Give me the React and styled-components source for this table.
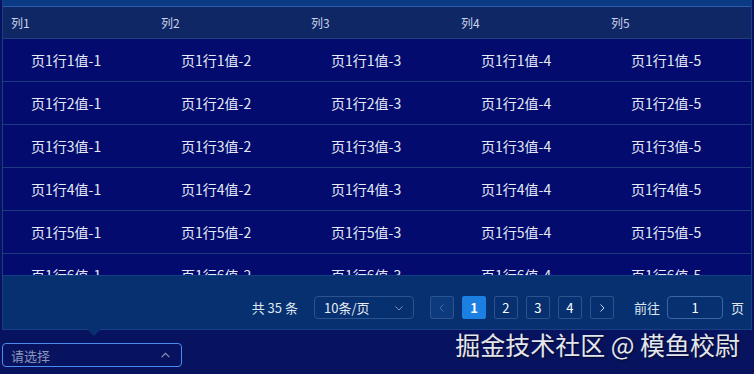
import React from 'react'
import styled, { createGlobalStyle } from 'styled-components'

const GlobalStyle = createGlobalStyle`
  html, body {
    margin: 0;
    padding: 0;
    background: #08135f;
  }
  body {
    font-family: "Noto Sans CJK SC", "Noto Sans", sans-serif;
  }
`

const Page = styled.div`
  position: relative;
  width: 754px;
  height: 374px;
  overflow: hidden;
  background: #08135f;
`

const Popover = styled.div`
  position: relative;
  margin-left: 2px;
  width: 750px;
  height: 330px;
  box-sizing: border-box;
  border: 1px solid #1b3f86;
  border-top: none;
  background: #030c6e;
  display: flex;
  flex-direction: column;
`

const TopStrip = styled.div`
  height: 6px;
  background: #0b3a84;
  border-bottom: 1px solid #2b5cab;
  flex-shrink: 0;
`

const TableWrap = styled.div`
  height: 268px;
  overflow: hidden;
  flex-shrink: 0;
`

const Grid = styled.div`
  display: grid;
  grid-template-columns: repeat(5, 150px);
`

const HeadCell = styled.div`
  height: 31px;
  line-height: 31px;
  padding-left: 8px;
  font-size: 12px;
  color: #c9d2ea;
  background: #0f2764;
  border-bottom: 1px solid #22407e;
`

const Cell = styled.div`
  height: 42px;
  line-height: 42px;
  padding-left: 28px;
  font-size: 14px;
  color: #e6eaf5;
  border-bottom: 1px solid #1d3a7f;
`

const Pager = styled.div`
  flex: 1;
  background: #06306f;
  border-top: 1px solid #133f85;
  display: flex;
  align-items: center;
  justify-content: flex-end;
  padding: 20px 7px 10px 0;
  font-size: 13px;
  color: #dfe5f2;
`

const Total = styled.span`
  margin-right: 16px;
`

const SizeSelect = styled.div`
  width: 100px;
  height: 23px;
  box-sizing: border-box;
  border: 1px solid #2a538f;
  border-radius: 4px;
  display: flex;
  align-items: center;
  justify-content: space-between;
  padding: 0 9px;
  margin-right: 16px;
  color: #e8ecf6;
`

const Pages = styled.div`
  display: flex;
  gap: 8px;
`

const PageBtn = styled.div`
  width: 24px;
  height: 23px;
  box-sizing: border-box;
  border-radius: 2px;
  display: flex;
  align-items: center;
  justify-content: center;
  font-size: 13px;
  font-weight: ${p => (p.$active ? 700 : 400)};
  color: ${p => (p.$disabled ? '#4a6aa0' : '#ffffff')};
  background: ${p => (p.$active ? '#1b80e2' : p.$disabled ? '#0d3a7c' : 'transparent')};
  border: 1px solid ${p => (p.$active ? '#1b80e2' : '#2a538f')};
`

const Jump = styled.div`
  display: flex;
  align-items: center;
  margin-left: 20px;
`

const JumpInput = styled.div`
  width: 56px;
  height: 23px;
  box-sizing: border-box;
  border: 1px solid #3a66a8;
  border-radius: 4px;
  display: flex;
  align-items: center;
  justify-content: center;
  margin: 0 8px 0 7px;
  color: #ffffff;
`

const Arrow = styled.div`
  position: absolute;
  left: 84px;
  bottom: -7px;
  width: 0;
  height: 0;
  border-left: 7px solid transparent;
  border-right: 7px solid transparent;
  border-top: 7px solid #06306f;
`

const Select = styled.div`
  margin: 13px 0 0 2px;
  width: 180px;
  height: 24px;
  box-sizing: border-box;
  border: 1px solid #4a8cf0;
  border-radius: 4px;
  background: #08135f;
  display: flex;
  align-items: center;
  justify-content: space-between;
  padding: 0 10px 0 8px;
  font-size: 13px;
  color: #8c96bd;
`

const Watermark = styled.div`
  position: absolute;
  right: 14px;
  bottom: 12px;
  font-size: 25px;
  color: #e4e6ee;
  text-shadow: 1px 1px 2px rgba(0, 0, 0, 0.6);
  white-space: nowrap;
`

const Chevron = ({ dir = 'down', color = '#7e8fb8', size = 10 }) => (
  <svg width={size} height={size} viewBox="0 0 10 10" fill="none">
    {dir === 'down' && <path d="M1.5 3.5 L5 7 L8.5 3.5" stroke={color} strokeWidth="1" />}
    {dir === 'up' && <path d="M1.5 6.5 L5 3 L8.5 6.5" stroke={color} strokeWidth="1" />}
    {dir === 'left' && <path d="M6.5 1.5 L3 5 L6.5 8.5" stroke={color} strokeWidth="1" />}
    {dir === 'right' && <path d="M3.5 1.5 L7 5 L3.5 8.5" stroke={color} strokeWidth="1" />}
  </svg>
)

const COLUMNS = ['列1', '列2', '列3', '列4', '列5']
const ROWS = [1, 2, 3, 4, 5, 6]

export default function App() {
  return (
    <Page>
      <GlobalStyle />
      <Popover>
        <TopStrip />
        <TableWrap>
          <Grid>
            {COLUMNS.map(c => (
              <HeadCell key={c}>{c}</HeadCell>
            ))}
            {ROWS.map(r =>
              COLUMNS.map((c, i) => (
                <Cell key={r + '-' + i}>{`页1行${r}值-${i + 1}`}</Cell>
              ))
            )}
          </Grid>
        </TableWrap>
        <Pager>
          <Total>共 35 条</Total>
          <SizeSelect>
            <span>10条/页</span>
            <Chevron dir="down" />
          </SizeSelect>
          <Pages>
            <PageBtn $disabled>
              <Chevron dir="left" color="#4a6aa0" />
            </PageBtn>
            <PageBtn $active>1</PageBtn>
            <PageBtn>2</PageBtn>
            <PageBtn>3</PageBtn>
            <PageBtn>4</PageBtn>
            <PageBtn>
              <Chevron dir="right" color="#c9d4ee" />
            </PageBtn>
          </Pages>
          <Jump>
            <span>前往</span>
            <JumpInput>1</JumpInput>
            <span>页</span>
          </Jump>
        </Pager>
        <Arrow />
      </Popover>
      <Select>
        <span>请选择</span>
        <Chevron dir="up" color="#8c96bd" size={11} />
      </Select>
      <Watermark>掘金技术社区 @ 模鱼校尉</Watermark>
    </Page>
  )
}
